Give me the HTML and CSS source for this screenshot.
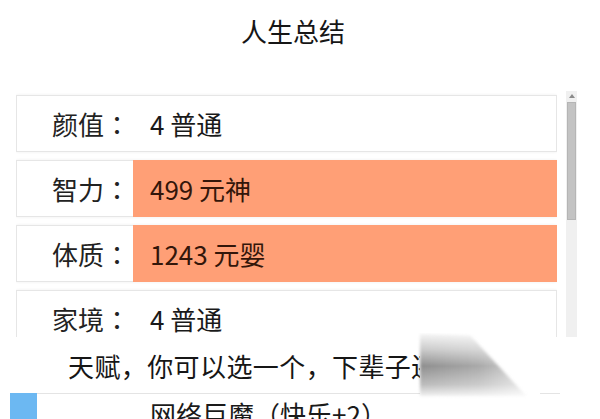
FILE: index.html
```html
<!DOCTYPE html>
<html lang="zh-CN">
<head>
<meta charset="utf-8">
<title>人生总结</title>
<link rel="stylesheet" href="styles.css">
</head>
<body>
<div class="page">
  <h1 class="title">人生总结</h1>
  <div class="summary">
    <div class="rows">
      <div class="row"><div class="label">颜值<span class="p">：</span></div><div class="value">4 普通</div></div>
      <div class="row"><div class="label">智力<span class="p">：</span></div><div class="value hl">499 元神</div></div>
      <div class="row"><div class="label">体质<span class="p">：</span></div><div class="value hl">1243 元婴</div></div>
      <div class="row"><div class="label">家境<span class="p">：</span></div><div class="value">4 普通</div></div>
    </div>
    <div class="scrollbar">
      <div class="arrow"></div>
      <div class="thumb"></div>
    </div>
  </div>
  <div class="talents">
    <p class="hint">天赋<span class="p">，</span>你可以选一个<span class="p">，</span>下辈子还</p>
    <div class="talent">
      <span class="mark"></span>
      <span class="name">网络巨魔<span class="p">（</span>快乐+2<span class="p">）</span></span>
    </div>
  </div>
  <svg class="curl" width="125" height="80" viewBox="0 0 125 80" aria-hidden="true">
    <defs>
      <linearGradient id="sh" x1="0" y1="0" x2="1" y2="0">
        <stop offset="0" stop-color="#8e8e8e"/>
        <stop offset="0.55" stop-color="#a9a9a9"/>
        <stop offset="1" stop-color="#d8d8d8"/>
      </linearGradient>
      <linearGradient id="vm" x1="0" y1="0" x2="0" y2="1">
        <stop offset="0" stop-color="#111"/>
        <stop offset="0.25" stop-color="#777"/>
        <stop offset="0.5" stop-color="#fff"/>
        <stop offset="0.78" stop-color="#999"/>
        <stop offset="1" stop-color="#000"/>
      </linearGradient>
      <mask id="m" maskUnits="userSpaceOnUse" x="0" y="0" width="125" height="80">
        <rect x="0" y="8" width="125" height="66" fill="url(#vm)"/>
      </mask>
      <filter id="bl" x="-10%" y="-10%" width="120%" height="120%">
        <feGaussianBlur stdDeviation="1.5"/>
      </filter>
    </defs>
    <rect x="5" y="4" width="120" height="70" fill="#ffffff"/>
    <g mask="url(#m)">
      <polygon points="5,8 55,10 112,72 5,72" fill="url(#sh)" filter="url(#bl)"/>
    </g>
  </svg>
</div>
</body>
</html>
```

FILE: styles.css
```css
* { box-sizing: border-box; }
html, body { margin: 0; padding: 0; background: #ffffff; }
body {
  font-family: "Noto Sans CJK SC", "Noto Sans", "Liberation Sans", sans-serif;
  color: #1a1a1a;
  width: 600px;
  height: 419px;
  overflow: hidden;
}
.page {
  position: relative;
  display: flex;
  flex-direction: column;
  height: 419px;
  overflow: hidden;
}
.p {
  font-family: "Noto Sans CJK TC", "Noto Sans CJK SC", sans-serif;
}
.title {
  flex: 0 0 85px;
  margin: 0;
  padding: 15px 14px 0 0;
  font-size: 26px;
  line-height: 32px;
  font-weight: normal;
  text-align: center;
  color: #161616;
}
.summary {
  flex: 0 0 252px;
  min-height: 0;
  overflow: hidden;
  display: flex;
  padding-left: 16px;
}
.rows {
  width: 541px;
  min-height: 0;
  overflow: hidden;
  padding-top: 10px;
  display: flex;
  flex-direction: column;
  gap: 8px;
}
.row {
  flex: 0 0 57px;
  display: grid;
  grid-template-columns: 116px 1fr;
  background: #ffffff;
  border: 1px solid #e6e6e6;
  box-shadow: 0 0 3px rgba(0, 0, 0, 0.07);
  font-size: 26px;
}
.label {
  padding-left: 35px;
  display: flex;
  align-items: center;
  color: #222222;
  white-space: nowrap;
}
.value {
  padding-left: 17px;
  display: flex;
  align-items: center;
  color: #1a1a1a;
  white-space: nowrap;
}
.value.hl {
  background: #ff9f76;
  color: #33160a;
  margin: -1px -1px -1px 0;
}
.scrollbar {
  width: 11px;
  margin-left: 9px;
  margin-top: 6px;
  background: #f0f0f0;
  display: flex;
  flex-direction: column;
  align-items: center;
}
.arrow {
  width: 0;
  height: 0;
  margin-top: 3px;
  border-left: 3px solid transparent;
  border-right: 3px solid transparent;
  border-bottom: 4px solid #8a8a8a;
}
.thumb {
  margin-top: 4px;
  width: 9px;
  height: 118px;
  background: #c3c3c3;
  border: 1px solid #b5b5b5;
}
.talents {
  flex: 0 0 auto;
  background: #ffffff;
  padding-top: 13px;
}
.hint {
  margin: 0;
  padding-left: 68px;
  font-size: 26px;
  letter-spacing: 0.4px;
  line-height: 32px;
  color: #161616;
  height: 43px;
  white-space: nowrap;
}
.talent {
  display: flex;
  margin-left: 10px;
  width: 550px;
  border-top: 1px solid #e4e4e4;
  height: 40px;
}
.mark {
  width: 27px;
  height: 40px;
  background: #6cb8f2;
  margin-top: -1px;
}
.name {
  padding-left: 113px;
  padding-top: 3px;
  font-size: 26px;
  line-height: 34px;
  color: #1a1a1a;
  white-space: nowrap;
}
.curl {
  position: absolute;
  left: 415px;
  top: 325px;
}
```
